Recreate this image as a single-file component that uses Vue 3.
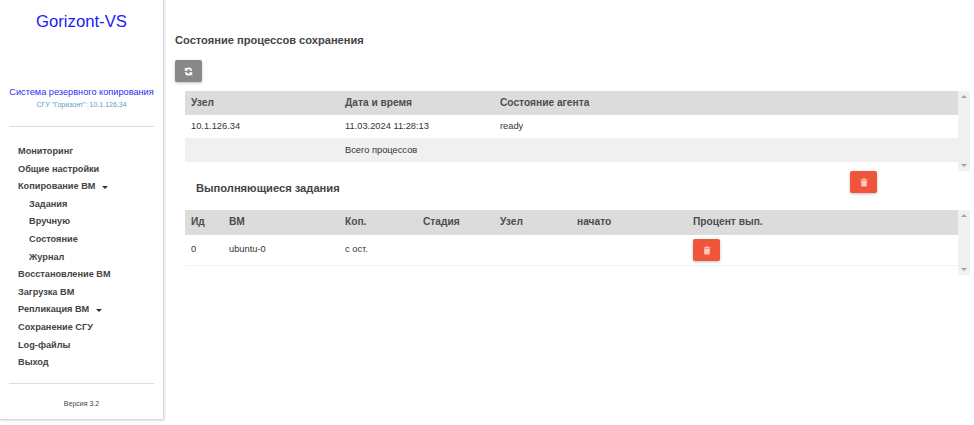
<script setup>
const menu = [
  { t: 'Мониторинг' },
  { t: 'Общие настройки' },
  { t: 'Копирование ВМ', caret: true },
  { t: 'Задания', sub: true },
  { t: 'Вручную', sub: true },
  { t: 'Состояние', sub: true },
  { t: 'Журнал', sub: true },
  { t: 'Восстановление ВМ' },
  { t: 'Загрузка ВМ' },
  { t: 'Репликация ВМ', caret: true },
  { t: 'Сохранение СГУ' },
  { t: 'Log-файлы' },
  { t: 'Выход' },
]
</script>

<template>
  <div class="page">
    <aside class="side">
      <h1 class="brand">Gorizont-VS</h1>
      <p class="sys">Система резервного копирования</p>
      <p class="sgu">СГУ "Горизонт": 10.1.126.34</p>
      <hr class="rule first" />
      <nav class="menu">
        <a v-for="m in menu" :key="m.t" class="item" :class="{ sub: m.sub }">
          {{ m.t }}<i v-if="m.caret" class="caret"></i>
        </a>
      </nav>
      <hr class="rule second" />
      <p class="ver">Версия 3.2</p>
    </aside>

    <main class="main">
      <h2 class="title">Состояние процессов сохранения</h2>
      <button class="btn grey">
        <svg width="9" height="9" viewBox="0 0 24 24" fill="none" stroke="#fff" stroke-width="5">
          <path d="M20 10A8.5 8.5 0 0 0 5 7" />
          <path d="M4 14a8.5 8.5 0 0 0 15 3" />
          <path d="M2 1v9h9z" fill="#fff" stroke="none" />
          <path d="M22 23v-9h-9z" fill="#fff" stroke="none" />
        </svg>
      </button>

      <section class="scroller s1">
        <div class="grid g1 head">
          <span>Узел</span><span>Дата и время</span><span>Состояние агента</span>
        </div>
        <div class="grid g1 row r1">
          <span>10.1.126.34</span><span>11.03.2024 11:28:13</span><span>ready</span>
        </div>
        <div class="grid g1 row r2">
          <span></span><span>Всего процессов</span><span></span>
        </div>
        <div class="bar">
          <i class="up"></i><i class="down"></i>
        </div>
      </section>

      <div class="jobs">
        <h3 class="sub-title">Выполняющиеся задания</h3>
        <button class="btn red">
          <svg width="8" height="9" viewBox="0 0 18 20" fill="#ffc9bd">
            <path d="M6 1h6l1 2h4v2H1V3h4zM2.5 6h13L15 19H3z" />
          </svg>
        </button>
      </div>

      <section class="scroller s2">
        <div class="grid g2 head h2">
          <span>Ид</span><span>ВМ</span><span>Коп.</span><span>Стадия</span><span>Узел</span><span>начато</span><span>Процент вып.</span>
        </div>
        <div class="grid g2 row r3">
          <span>0</span><span>ubuntu-0</span><span>с ост.</span><span></span><span></span><span></span>
          <span class="action">
            <button class="btn red">
              <svg width="8" height="9" viewBox="0 0 18 20" fill="#ffc9bd">
                <path d="M6 1h6l1 2h4v2H1V3h4zM2.5 6h13L15 19H3z" />
              </svg>
            </button>
          </span>
        </div>
        <div class="bar">
          <i class="up"></i><i class="down"></i>
        </div>
      </section>
    </main>
  </div>
</template>

<style>
html, body { margin: 0; background: #fff; }
</style>

<style scoped>
.page {
  width: 974px;
  height: 425px;
  display: flex;
  overflow: hidden;
  font-family: "Liberation Sans", Arial, sans-serif;
  color: #3c3c3c;
  background: #fff;
}
.side {
  width: 164px;
  height: 420px;
  box-sizing: border-box;
  flex: none;
  padding: 12px 9px 0;
  border-right: 1px solid #d8d8d8;
  border-bottom: 1px solid #d8d8d8;
  box-shadow: 1px 1px 2px rgba(0, 0, 0, 0.12);
  border-bottom-right-radius: 2px;
  text-align: center;
}
.brand {
  margin: 0;
  font-size: 16.7px;
  line-height: 20px;
  font-weight: 400;
  color: #1a1aff;
}
.sys {
  margin: 54px -4px 0;
  font-size: 9.2px;
  line-height: 12px;
  color: #2d2df0;
  white-space: nowrap;
}
.sgu {
  margin: 2px 0 0;
  font-size: 7px;
  line-height: 9px;
  color: #55a3bd;
}
.rule {
  margin: 0;
  border: 0;
  height: 1px;
  background: #ddd;
}
.first { margin-top: 17px; }
.menu {
  display: flex;
  flex-direction: column;
  margin-top: 16px;
  text-align: left;
}
.item {
  height: 17.6px;
  line-height: 17.6px;
  padding-left: 9px;
  font-size: 9.2px;
  font-weight: 700;
  color: #444;
  white-space: nowrap;
}
.item.sub { padding-left: 20px; }
.caret {
  display: inline-block;
  margin-left: 7px;
  vertical-align: 0;
  border-left: 3px solid transparent;
  border-right: 3px solid transparent;
  border-top: 3px solid #333;
}
.second { margin-top: 11px; }
.ver {
  margin: 15px 0 0;
  font-size: 7px;
  line-height: 9px;
  color: #444;
}
.main {
  flex: 1;
  min-width: 0;
  padding: 33px 4px 0 11px;
}
.title {
  margin: 0;
  font-size: 11.1px;
  line-height: 15px;
  font-weight: 700;
  color: #444;
}
.btn {
  display: flex;
  align-items: center;
  justify-content: center;
  width: 27px;
  height: 22px;
  padding: 0;
  border: 0;
  border-radius: 2px;
  box-shadow: 0 1px 3px rgba(0, 0, 0, 0.25);
}
.grey { margin-top: 12px; background: #888; }
.red { background: #f0553c; }
.scroller {
  position: relative;
  margin-left: 10px;
  padding-right: 12px;
}
.s1 { margin-top: 9px; height: 80px; }
.s2 { height: 65px; }
.grid { display: grid; align-items: center; }
.grid > span { padding-left: 6px; padding-bottom: 2px; white-space: nowrap; }
.g1 { grid-template-columns: 154px 155px 1fr; }
.g2 { grid-template-columns: 38px 116px 78px 77px 77px 116px 1fr; }
.head {
  height: 24px;
  background: #dcdcdc;
  font-size: 10.2px;
  font-weight: 700;
  color: #4d4d4d;
}
.h2 { height: 25px; }
.row { font-size: 9.3px; color: #333; }
.r1 { height: 23px; }
.r2 { height: 24px; background: #f0f0f0; }
.r2 > span { padding-bottom: 0; }
.r3 { height: 31px; box-sizing: border-box; border-bottom: 1px solid #f2f2f2; }
.r3 > span { padding-bottom: 3px; }
.r3 > .action { padding-bottom: 0; }
.bar {
  position: absolute;
  top: 0;
  right: 0;
  bottom: 0;
  width: 12px;
  background: #f1f1f1;
}
.up, .down {
  position: absolute;
  left: 3px;
  border-left: 3px solid transparent;
  border-right: 3px solid transparent;
}
.up { top: 4px; border-bottom: 3px solid #a3a3a3; }
.down { bottom: 4px; border-top: 3px solid #a3a3a3; }
.jobs {
  position: relative;
  height: 39px;
  margin-left: 21px;
  display: flex;
  align-items: flex-start;
}
.sub-title {
  margin: 10px 0 0;
  font-size: 11.15px;
  line-height: 15px;
  font-weight: 700;
  color: #444;
}
.jobs .red {
  position: absolute;
  left: 654px;
  top: 0;
}
</style>
